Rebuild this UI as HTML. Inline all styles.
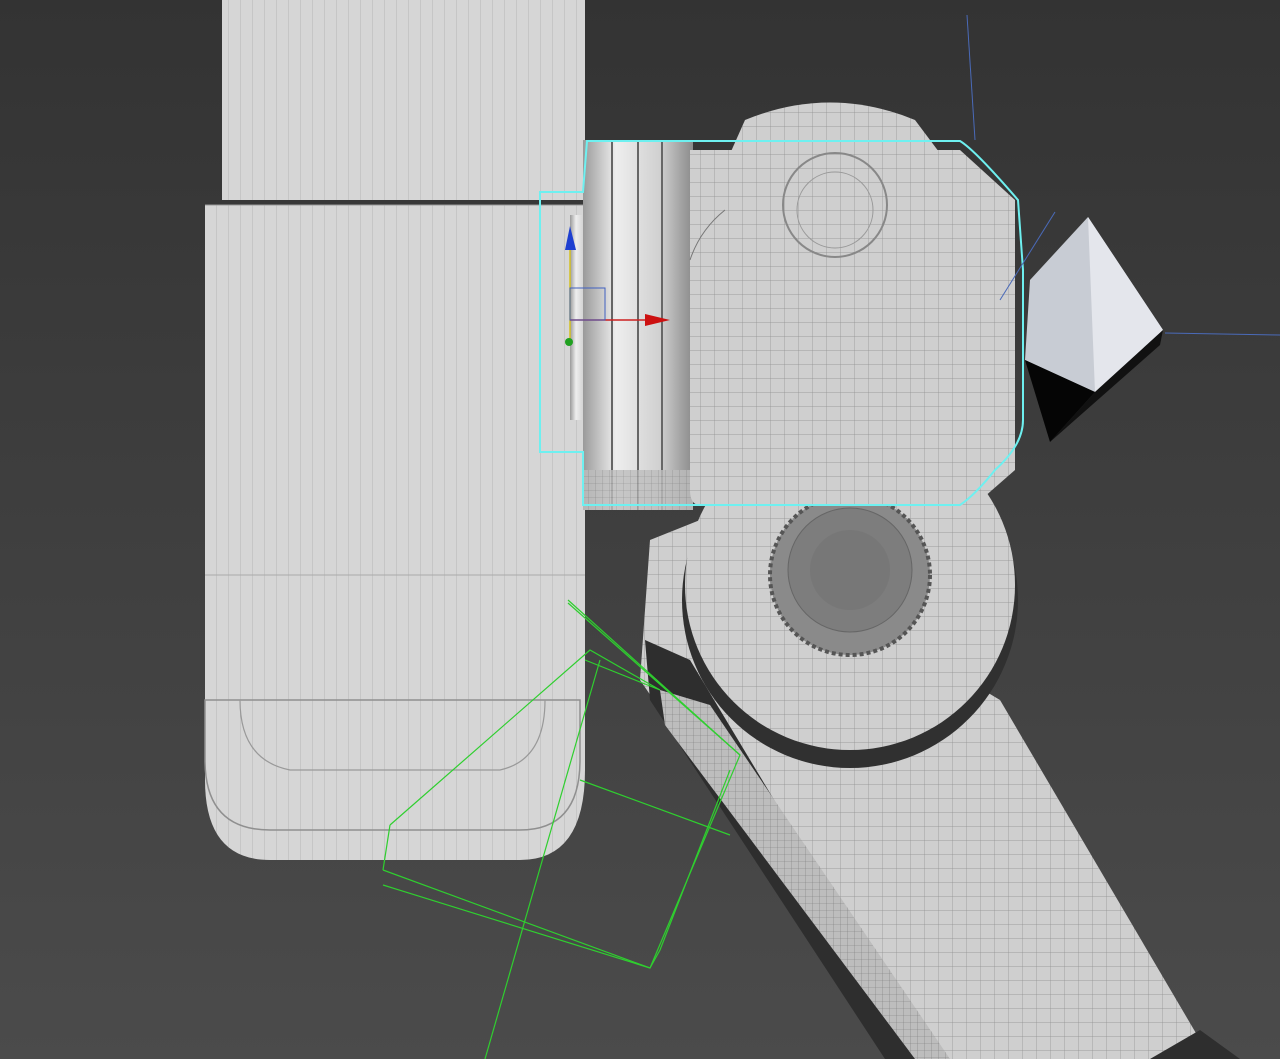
<!DOCTYPE html>
<html><head><meta charset="utf-8"><style>
html,body{margin:0;padding:0;width:1280px;height:1059px;overflow:hidden;background:#3c3c3c}
svg{display:block}
</style></head><body>
<svg width="1280" height="1059" viewBox="0 0 1280 1059" xmlns="http://www.w3.org/2000/svg">
<defs>
<linearGradient id="bg" x1="0" y1="0" x2="0" y2="1"><stop offset="0" stop-color="#333333"/><stop offset="1" stop-color="#4b4b4b"/></linearGradient>
<pattern id="gridV" width="12" height="1059" patternUnits="userSpaceOnUse"><rect width="12" height="1059" fill="#d6d6d6"/><line x1="0" y1="0" x2="0" y2="1059" stroke="#a8a8a8" stroke-width="0.7"/></pattern>
<pattern id="grid" width="14" height="14" patternUnits="userSpaceOnUse"><rect width="14" height="14" fill="#cfcfcf"/><path d="M0 0H14M0 0V14" stroke="#8e8e8e" stroke-width="0.7"/></pattern>
<pattern id="gridF" width="7" height="7" patternUnits="userSpaceOnUse"><rect width="7" height="7" fill="#bdbdbd"/><path d="M0 0H7M0 0V7" stroke="#7a7a7a" stroke-width="0.6"/></pattern>
<linearGradient id="cyl" x1="0" y1="0" x2="1" y2="0"><stop offset="0" stop-color="#9a9a9a"/><stop offset="0.3" stop-color="#eeeeee"/><stop offset="0.7" stop-color="#d0d0d0"/><stop offset="1" stop-color="#8a8a8a"/></linearGradient>
</defs>
<rect width="1280" height="1059" fill="url(#bg)"/>
<!-- arm -->
<path d="M650 540 L700 520 L1000 700 L1200 1040 L1200 1059 L900 1059 L640 680 Z" fill="url(#grid)"/>
<path d="M645 640 L690 660 L930 1059 L885 1059 L650 700 Z" fill="#2e2e2e"/>
<path d="M660 690 L710 705 L950 1059 L915 1059 L665 725 Z" fill="url(#gridF)"/>
<path d="M1150 1059 L1200 1030 L1240 1059Z" fill="#2e2e2e"/>
<!-- left tall object -->
<path d="M222 0 H585 V200 H222 Z" fill="url(#gridV)"/>
<path d="M205 205 H585 V770 Q585 860 520 860 H270 Q205 860 205 780 Z" fill="url(#gridV)"/>
<path d="M205 700 H580 V760 Q580 830 520 830 H270 Q205 830 205 760 Z" fill="none" stroke="#8f8f8f" stroke-width="1.5"/>
<path d="M240 700 Q240 760 290 770 H500 Q545 760 545 700" fill="none" stroke="#999" stroke-width="1.2"/>
<line x1="205" y1="205" x2="585" y2="205" stroke="#999"/>
<line x1="205" y1="575" x2="585" y2="575" stroke="#aaa"/>
<!-- cylinders -->
<rect x="570" y="215" width="20" height="205" fill="url(#cyl)"/>
<rect x="583" y="140" width="110" height="370" fill="url(#cyl)"/>
<path d="M612 140V510M638 140V510M662 140V510" stroke="#666" stroke-width="2"/>
<rect x="583" y="470" width="110" height="40" fill="url(#gridF)" opacity="0.8"/>
<!-- joint -->
<circle cx="850" cy="600" r="168" fill="#303030"/>
<circle cx="850" cy="585" r="165" fill="url(#grid)"/>
<circle cx="850" cy="575" r="80" fill="#8a8a8a" stroke="#555" stroke-width="4" stroke-dasharray="4 3"/>
<circle cx="850" cy="570" r="62" fill="#7d7d7d" stroke="#666"/>
<circle cx="850" cy="570" r="40" fill="#777"/>
<!-- head -->
<path d="M690 150 H960 L1015 200 V470 L975 505 H700 Q690 505 690 490 Z" fill="url(#grid)"/>
<path d="M745 120 Q830 85 915 120 L945 160 L985 265 L985 460 L700 460 L690 270 L725 165 Z" fill="url(#grid)"/>
<path d="M690 260 Q700 230 725 210" stroke="#777" fill="none"/>
<circle cx="835" cy="205" r="52" fill="url(#grid)" stroke="#888" stroke-width="2"/>
<circle cx="835" cy="210" r="38" fill="url(#grid)" stroke="#999"/>
<!-- selection outline -->
<path d="M587 141 H960 Q975 150 1018 200 L1023 270 V420 Q1023 445 995 470 Q975 495 960 505 H583 V452 H540 V192 H583 Z" fill="none" stroke="#6ef0f0" stroke-width="2"/>
<!-- gizmo -->
<line x1="570" y1="230" x2="570" y2="340" stroke="#d4c020" stroke-width="1.5"/>
<polygon points="570,226 565,250 576,250" fill="#1e3fd0"/>
<line x1="570" y1="320" x2="650" y2="320" stroke="#cc2020" stroke-width="1.5"/>
<polygon points="670,320 645,314 645,326" fill="#cc1010"/>
<rect x="570" y="288" width="35" height="32" fill="none" stroke="#4060c0"/>
<circle cx="569" cy="342" r="4" fill="#20a020"/>
<!-- light -->
<line x1="967" y1="15" x2="975" y2="140" stroke="#4a6ab8"/>
<line x1="1165" y1="333" x2="1280" y2="335" stroke="#4a6ab8"/>
<line x1="1055" y1="212" x2="1000" y2="300" stroke="#4a6ab8"/>
<polygon points="1088,217 1163,330 1095,392 1025,360 1030,280" fill="#c8ccd4"/>
<polygon points="1088,217 1163,330 1095,392" fill="#e4e6ec"/>
<polygon points="1025,360 1095,392 1050,442" fill="#050505"/>
<polygon points="1095,392 1163,330 1160,345 1050,442" fill="#111"/>
<!-- green box -->
<g stroke="#2fcf2f" stroke-width="1.2" fill="none">
<path d="M383 870 L650 968 L740 755 L568 600"/>
<path d="M383 870 L390 825 M383 885 L650 968 M650 968 L660 950 L730 770"/>
<path d="M568 603 L740 755 M580 780 L730 835 M485 1059 L600 660 M585 660 L660 690"/>
<path d="M390 825 L590 650 L660 690"/>
</g>
</svg>
</body></html>
